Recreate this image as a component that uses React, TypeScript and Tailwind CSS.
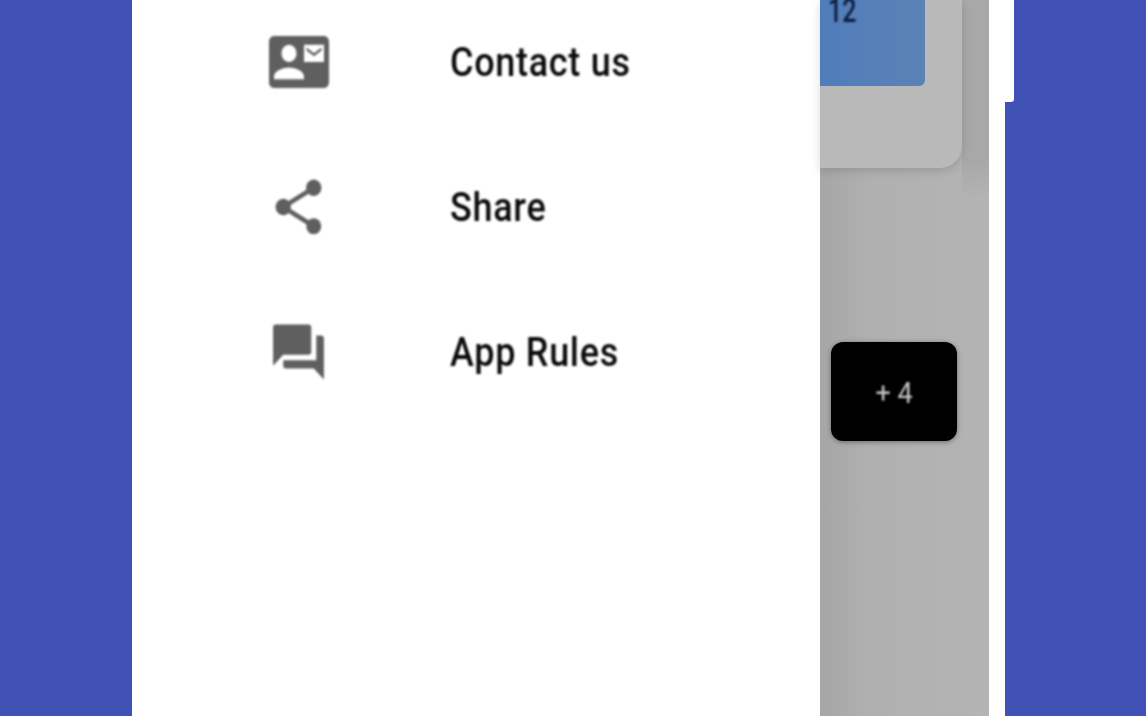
function ContactIcon() {
    return (
        <svg viewBox="0 0 24 18" preserveAspectRatio="none" className="w-[60px] h-[52px] fill-[#5f5f5f]">
            <path d="M21 5V4l-3 2-3-2v1l3 2 3-2zm1-5H2C.9 0 0 .9 0 2v14c0 1.1.9 2 2 2h20c1.1 0 1.99-.9 1.99-2L24 2c0-1.100-.9-2-2-2zM8 3c1.660 0 3 1.340 3 3s-1.340 3-3 3-3-1.340-3-3 1.340-3 3-3zm6 12H2v-1c0-2 4-3.100 6-3.100s6 1.100 6 3.100v1zm8-6h-8V3h8v6z" />
        </svg>
    );
}

function ShareIcon() {
    return (
        <svg viewBox="0 0 24 24" preserveAspectRatio="none" className="w-[61px] h-[66px] fill-[#5f5f5f]">
            <path d="M18 16.080c-.76 0-1.440.3-1.960.77L8.910 12.700c.05-.23.09-.46.09-.7s-.04-.47-.09-.7l7.050-4.110c.54.5 1.250.81 2.040.81 1.660 0 3-1.340 3-3s-1.340-3-3-3-3 1.340-3 3c0 .24.04.47.09.7L8.040 9.810C7.500 9.310 6.790 9 6 9c-1.660 0-3 1.340-3 3s1.340 3 3 3c.79 0 1.500-.31 2.040-.81l7.120 4.160c-.05.21-.08.43-.08.65 0 1.610 1.310 2.920 2.920 2.920s2.920-1.310 2.920-2.920-1.310-2.920-2.920-2.920z" />
        </svg>
    );
}

function ForumIcon() {
    return (
        <svg viewBox="0 0 24 24" preserveAspectRatio="none" className="w-[61px] h-[66px] fill-[#5f5f5f]">
            <path d="M21 6h-2v9H6v2c0 .55.45 1 1 1h11l4 4V7c0-.55-.45-1-1-1zm-4 6V3c0-.55-.45-1-1-1H3c-.55 0-1 .45-1 1v14l4-4h10c.55 0 1-.45 1-1z" />
        </svg>
    );
}

const items = [
    { label: "Contact us", icon: <ContactIcon /> },
    { label: "Share", icon: <ShareIcon /> },
    { label: "App Rules", icon: <ForumIcon /> },
];

export default function App() {
    return (
        <div className="flex h-[716px] w-[1146px] overflow-hidden bg-[#3f51b5] font-['Roboto',sans-serif]">
            <div className="w-[132px]" />

            <div className="w-[688px] bg-white">
                <div className="-mt-[11px] blur-[0.8px]">
                    {items.map((item) => (
                        <div key={item.label} className="flex h-[145px] items-center">
                            <div className="flex w-[318px] justify-center pl-[16px]">
                                <div className="ml-[-1px] flex w-[61px] justify-center">{item.icon}</div>
                            </div>
                            <span className="mt-[3px] scale-y-[1.12] text-[36px] font-medium leading-none tracking-[0.7px] text-[#0a0a0a]">
                                {item.label}
                            </span>
                        </div>
                    ))}
                </div>
            </div>

            <div className="h-full w-[169px] bg-gradient-to-r from-[#a6a6a6] from-0% via-[#b0b0b0] via-30% to-[#b4b4b4]">
                <div className="flex">
                    <div className="relative z-10 h-[168px] w-[142px] rounded-br-[22px] bg-[#b9b9b9] shadow-[0_3px_10px_rgba(0,0,0,0.14)]">
                        <div className="h-[86px] w-[105px] overflow-hidden rounded-br-[6px] bg-gradient-to-r from-[#4f7dbb] to-[#5c82b4]">
                            <p className="ml-[8px] w-fit origin-top-left scale-y-[1.3] text-[25px] font-medium leading-[18px] text-[#0d1b3a] blur-[0.8px]">
                                12
                            </p>
                        </div>
                    </div>
                    <div className="h-[200px] flex-1 bg-gradient-to-b from-[#a8a8a8] from-80% to-transparent" />
                </div>
                <div className="ml-[11px] mt-[142px] flex h-[99px] w-[126px] items-center justify-center rounded-xl bg-black shadow-[0_1px_5px_rgba(0,0,0,0.4)]">
                    <span className="mt-[3px] scale-y-[1.1] text-[27px] text-[#c8c8c8] blur-[0.8px]">+ 4</span>
                </div>
            </div>

            <div className="flex flex-col">
                <div className="h-[102px] w-[25px] rounded-br-[3px] bg-white" />
                <div className="w-[16px] flex-1 bg-white" />
            </div>
        </div>
    );
}
